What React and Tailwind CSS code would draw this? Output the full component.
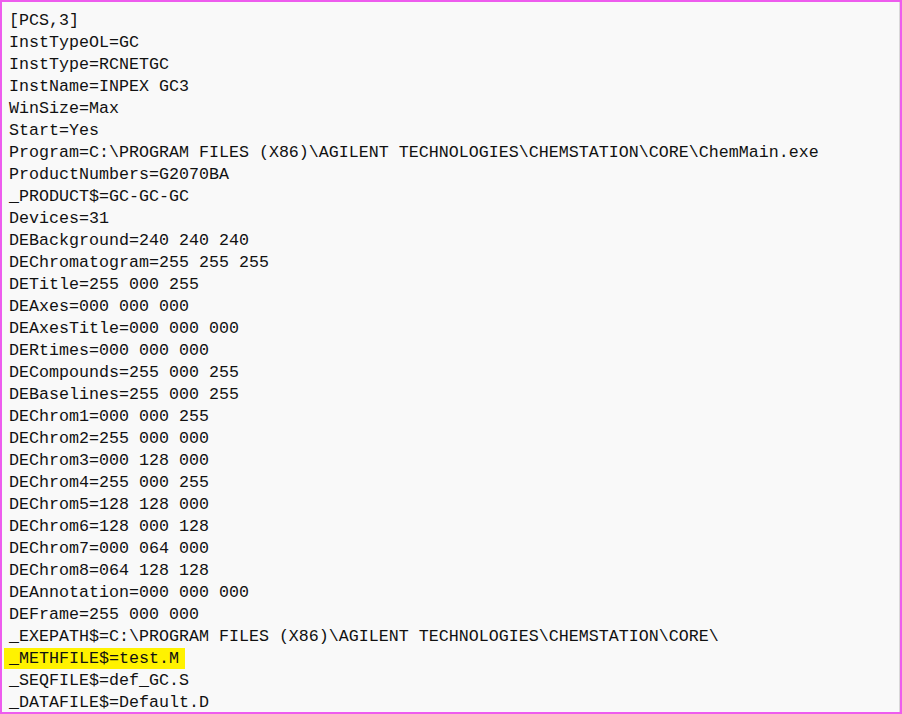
const lines = [
  '[PCS,3]',
  'InstTypeOL=GC',
  'InstType=RCNETGC',
  'InstName=INPEX GC3',
  'WinSize=Max',
  'Start=Yes',
  'Program=C:\\PROGRAM FILES (X86)\\AGILENT TECHNOLOGIES\\CHEMSTATION\\CORE\\ChemMain.exe',
  'ProductNumbers=G2070BA',
  '_PRODUCT$=GC-GC-GC',
  'Devices=31',
  'DEBackground=240 240 240',
  'DEChromatogram=255 255 255',
  'DETitle=255 000 255',
  'DEAxes=000 000 000',
  'DEAxesTitle=000 000 000',
  'DERtimes=000 000 000',
  'DECompounds=255 000 255',
  'DEBaselines=255 000 255',
  'DEChrom1=000 000 255',
  'DEChrom2=255 000 000',
  'DEChrom3=000 128 000',
  'DEChrom4=255 000 255',
  'DEChrom5=128 128 000',
  'DEChrom6=128 000 128',
  'DEChrom7=000 064 000',
  'DEChrom8=064 128 128',
  'DEAnnotation=000 000 000',
  'DEFrame=255 000 000',
  '_EXEPATH$=C:\\PROGRAM FILES (X86)\\AGILENT TECHNOLOGIES\\CHEMSTATION\\CORE\\',
  '_METHFILE$=test.M',
  '_SEQFILE$=def_GC.S',
  '_DATAFILE$=Default.D',
];

export default function App() {
  return (
    <div className="w-[902px] h-[714px] border-2 border-[#ee5cee] bg-[#f9f9f9] overflow-hidden">
      <div className="h-full border-r border-[#d9d9d9] pt-[8px] pl-[7px] font-['Liberation_Mono',monospace] text-[16.67px] leading-[22px] text-[#111111]">
        {lines.map((l, i) => (
          <div key={i} className="whitespace-pre">
            {l === '_METHFILE$=test.M' ? (
              <span className="bg-[#fff200] -ml-[5px] pl-[5px] pr-[6px] py-[1px]">{l}</span>
            ) : (
              l
            )}
          </div>
        ))}
      </div>
    </div>
  );
}
